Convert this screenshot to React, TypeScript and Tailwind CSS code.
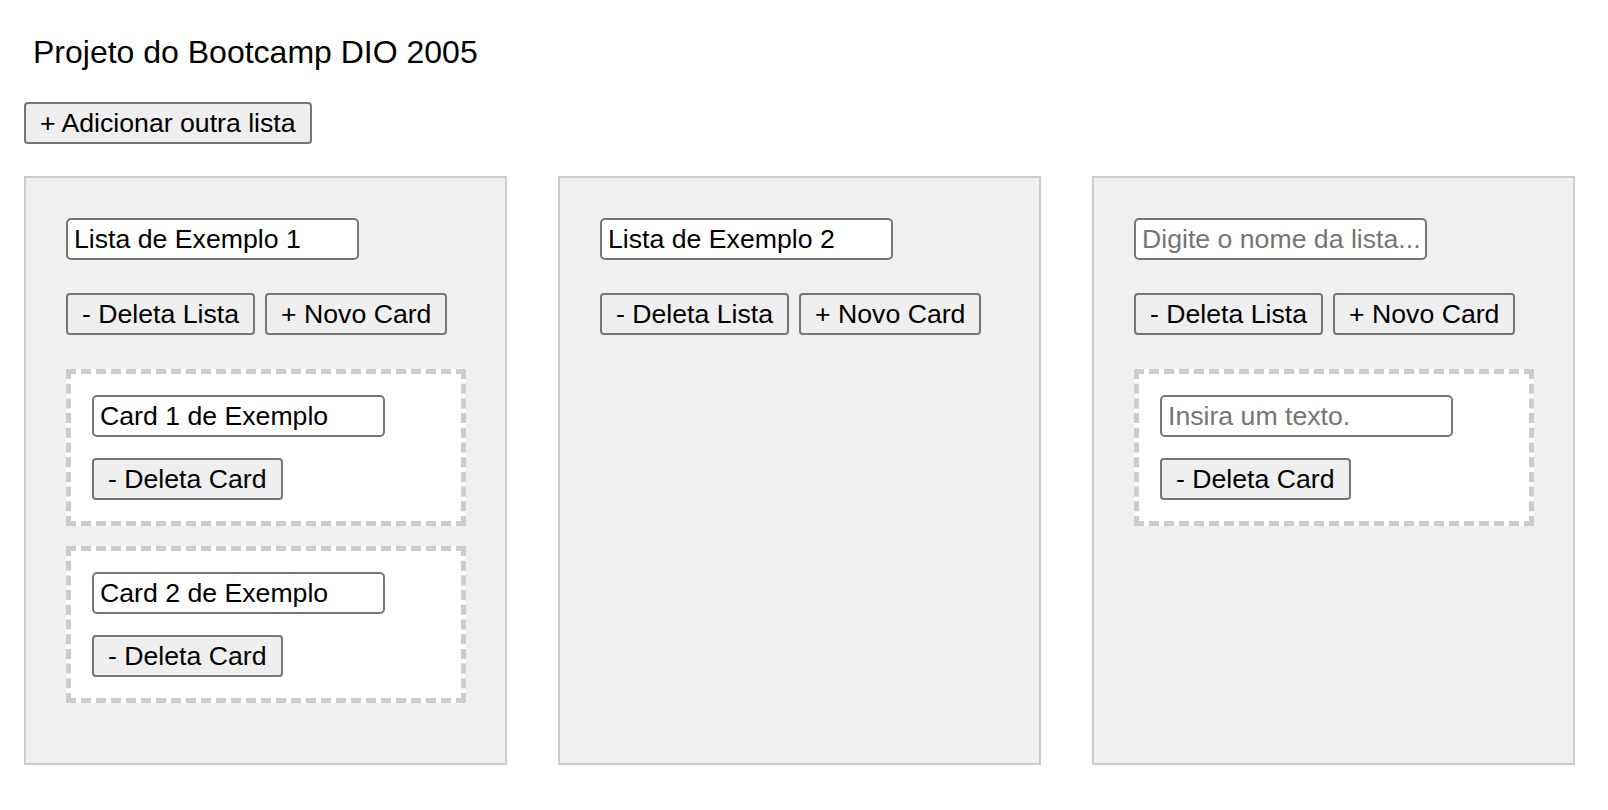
import React, { useState } from "react";

interface Card {
    id: number;
    text: string;
}

interface Lista {
    id: number;
    nome: string;
    cards: Card[];
}

const listasIniciais: Lista[] = [
    {
        id: 1,
        nome: "Lista de Exemplo 1",
        cards: [
            { id: 1, text: "Card 1 de Exemplo" },
            { id: 2, text: "Card 2 de Exemplo" }
        ]
    },
    { id: 2, nome: "Lista de Exemplo 2", cards: [] },
    { id: 3, nome: "", cards: [{ id: 3, text: "" }] }
];

const btn =
    "h-[42px] px-[14px] border-2 border-[#767676] rounded-[4px] bg-[#efefef] text-[26.67px] leading-none text-black whitespace-nowrap";
const campo =
    "block w-[293px] h-[42px] px-[6px] border-2 border-[#767676] rounded-[5px] bg-white text-[26.67px] text-black outline-none placeholder:text-[#757575]";

let proximoId = 10;

export default function App() {
    const [listas, setListas] = useState<Lista[]>(listasIniciais);

    const adicionarLista = () =>
        setListas([...listas, { id: proximoId++, nome: "", cards: [] }]);

    const deletaLista = (id: number) => setListas(listas.filter((l) => l.id !== id));

    const novoCard = (id: number) =>
        setListas(
            listas.map((l) =>
                l.id === id ? { ...l, cards: [...l.cards, { id: proximoId++, text: "" }] } : l
            )
        );

    const deletaCard = (listaId: number, cardId: number) =>
        setListas(
            listas.map((l) =>
                l.id === listaId ? { ...l, cards: l.cards.filter((c) => c.id !== cardId) } : l
            )
        );

    const renomeia = (id: number, nome: string) =>
        setListas(listas.map((l) => (l.id === id ? { ...l, nome } : l)));

    const editaCard = (listaId: number, cardId: number, text: string) =>
        setListas(
            listas.map((l) =>
                l.id === listaId
                    ? { ...l, cards: l.cards.map((c) => (c.id === cardId ? { ...c, text } : c)) }
                    : l
            )
        );

    return (
        <div className="min-h-screen bg-white pl-[24px] pt-[34px] pb-[40px] font-['Liberation_Sans',Arial,sans-serif] text-black">
            <h1 className="ml-[9px] text-[32px] leading-[36px] font-normal">Projeto do Bootcamp DIO 2005</h1>

            <button className={`${btn} mt-[32px]`} onClick={adicionarLista}>
                + Adicionar outra lista
            </button>

            {/* Quadro */}
            <div className="flex gap-[51px] mt-[32px]">
                {listas.map((lista) => (
                    <div
                        key={lista.id}
                        className="flex flex-col w-[483px] shrink-0 border-2 border-[#cccccc] bg-[#f0f0f0] px-[40px] pt-[40px] pb-[60px]"
                    >
                        <input
                            className={campo}
                            value={lista.nome}
                            placeholder="Digite o nome da lista..."
                            onChange={(e) => renomeia(lista.id, e.target.value)}
                        />

                        <div className="flex gap-[10px] mt-[33px]">
                            <button className={btn} onClick={() => deletaLista(lista.id)}>
                                - Deleta Lista
                            </button>
                            <button className={btn} onClick={() => novoCard(lista.id)}>
                                + Novo Card
                            </button>
                        </div>

                        {lista.cards.length > 0 && (
                            <div className="flex flex-col gap-[20px] mt-[34px]">
                                {lista.cards.map((card) => (
                                    <div
                                        key={card.id}
                                        className="w-[400px] border-[5px] border-dashed border-[#cccccc] bg-white p-[21px]"
                                    >
                                        <input
                                            className={campo}
                                            value={card.text}
                                            placeholder="Insira um texto."
                                            onChange={(e) => editaCard(lista.id, card.id, e.target.value)}
                                        />
                                        <button
                                            className={`${btn} mt-[21px]`}
                                            onClick={() => deletaCard(lista.id, card.id)}
                                        >
                                            - Deleta Card
                                        </button>
                                    </div>
                                ))}
                            </div>
                        )}
                    </div>
                ))}
            </div>
        </div>
    );
}
